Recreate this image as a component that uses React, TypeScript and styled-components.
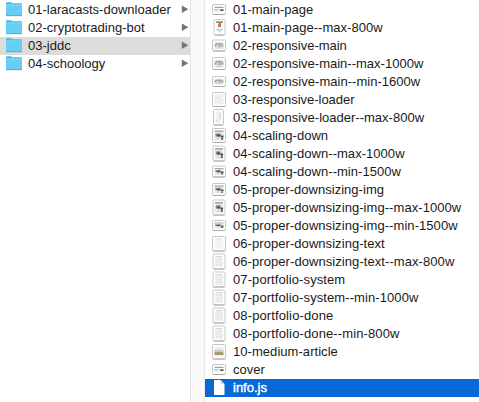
import React from "react";
import styled, { createGlobalStyle } from "styled-components";

const GlobalStyle = createGlobalStyle`
  body { margin: 0; background: #fff; overflow: hidden; }
`;

const Browser = styled.main`
  display: grid;
  grid-template-columns: 190px 15px 1fr;
  width: 479px;
  height: 402px;
  overflow: hidden;
  background: #fff;
  color: #1a1a1a;
  font: 13px/18px "Liberation Sans", Arial, sans-serif;
`;

const Column = styled.ul`
  margin: 0;
  padding: 1px 0 0;
  list-style: none;
  min-width: 0;
`;

const ScrollTrack = styled.div`
  box-sizing: border-box;
  background: #fafafa;
  border-left: 1px solid #e4e4e4;
  border-right: 1px solid #e8e8e8;
`;

const FolderRow = styled.li<{ $selected?: boolean }>`
  display: flex;
  align-items: center;
  height: 18px;
  padding: 0 1px 0 5px;
  background: ${(p) => (p.$selected ? "#dcdcdc" : "transparent")};
`;

const FileRow = styled.li<{ $selected?: boolean }>`
  display: flex;
  align-items: center;
  height: 18px;
  padding-left: 6px;
  background: ${(p) => (p.$selected ? "#0869d6" : "transparent")};
  color: ${(p) => (p.$selected ? "#fff" : "inherit")};
  -webkit-text-stroke: ${(p) => (p.$selected ? "0.4px #fff" : "0")};
`;

const Label = styled.span<{ $gap: number; $spacing: number }>`
  flex: 1;
  margin-left: ${(p) => p.$gap}px;
  letter-spacing: ${(p) => p.$spacing}px;
  white-space: nowrap;
`;

const Icon = styled.svg`
  display: block;
  flex: none;
`;

const FolderIcon = () => (
  <Icon width="18" height="18" viewBox="0 0 18 18">
    <path d="M1 2.2Q1 1.2 2 1.2H6L7.3 2.2H16Q17 2.2 17 3.2V15H1Z" fill="#43b9e8" />
    <path d="M1 3.6H17V15H1Z" fill="#66cdf5" />
    <path d="M1 4H17" stroke="#8bdcfa" strokeWidth=".8" />
    <path d="M1 14.7H17" stroke="#3da6d2" strokeWidth=".8" />
  </Icon>
);

const Disclosure = () => (
  <Icon width="8" height="18" viewBox="0 0 8 18">
    <path d="M.8 4.6 7.3 8.3 .8 12Z" fill="#757575" />
  </Icon>
);

type Kind = "landing" | "phone" | "hero" | "loader" | "tall" | "scale" | "text" | "lines" | "article" | "document";

/* left, top, width, height of the thumbnail's outer border inside an 18px cell */
type Frame = [number, number, number, number];

const strip: Frame = [1.5, 3.5, 13, 10];
const phone: Frame = [3, 0.5, 11, 15.5];
const low: Frame = [1.5, 3, 13, 11];
const medium: Frame = [1.5, 2.5, 13, 12];
const high: Frame = [1.5, 1.5, 13, 14];
const full: Frame = [2, 1, 12, 15];
const page: Frame = [1.5, 1.5, 13, 14.5];
const narrow: Frame = [2.5, 0.5, 10, 15.5];

const Scene = ({ kind }: { kind: Kind }) => {
  switch (kind) {
    case "landing":
      return <><path d="M0 .5h10v1.5H0z" fill="#777" /><path d="M0 4h3v3H0z" fill="#8fcbd2" /><path d="M3.5 4h2v2h-2z" fill="#f0a48e" /><path d="M6.5 4.5h3.5v3H6.5z" fill="#555" /><path d="M3 8h3v1H3z" fill="#aacbe4" /></>;
    case "phone":
      return <><path d="M0 0h10v1H0z" fill="#555" /><path d="M3 2h4v3H3z" fill="#df7050" /><path d="M4 1.5h3v1H4z" fill="#774536" /><path d="M1 6.5h3v1H1zM6 6.5h3v1H6z" fill="#62b7df" /><path d="M4 8h2v1.5H4z" fill="#7bbcf0" /></>;
    case "hero":
      return <><path d="M0 0h10v10H0z" fill="#ececec" /><path d="M0 4 2 1.5h6L10 4v2.5H7.5V4h-5v2.5H0z" fill="#a8a8a8" /><path d="M4 5h3v1.5H4z" fill="#8b7770" /><path d="M1 8h8v1H1z" fill="#b8c4b9" /></>;
    case "loader":
      return <><path d="M0 0h10v10H0z" fill="#f1f1f1" /><path d="M5 1v4h4v4H6M1 3h3M1 7h4" stroke="#e1e1e1" strokeWidth=".8" fill="none" /></>;
    case "tall":
      return <><path d="M0 0h10v10H0z" fill="#f1f1f1" /><path d="M6 1h3v6H6zM1 7h4v2H1z" fill="#dedede" /></>;
    case "scale":
      return <><path d="M0 0h10v10H0z" fill="#e9e9e9" /><path d="M0 0h10v1.5H0z" fill="#aaa" /><path d="M1 3h6v3H1z" fill="#888" /><path d="M3 4h3v2H3zM7 5h3v2H7zM7.5 7.5h2v1.7h-2z" fill="#484848" /><path d="M3 7.5h2v1H3z" fill="#a7cfbc" /></>;
    case "text":
      return <><path d="M0 0h10v10H0z" fill="#f4f4f4" /><path d="M2 0h6v.8H2z" fill="#d8d8d8" /><path d="M1 3h5v.6H1zM2 6h6v.6H2z" fill="#e8e8e8" /></>;
    case "lines":
      return <><path d="M0 0h10v10H0z" fill="#f0f0f0" /><path d="M2 0h6v.8H2z" fill="#cecece" /><path d="M1 2.5h3v.7H1zM5 2.5h4v.7H5zM2 5h6v.7H2zM1 7.5h4v.7H1zM6 7.5h3v.7H6z" fill="#dcdcdc" /></>;
    case "article":
      return <><path d="M0 0h10v10H0z" fill="#f1f1f1" /><path d="M0 3h10v4H0z" fill="#cccecd" /><path d="M0 5.5h3l2-.5 5 1V8H0z" fill="#a99868" /></>;
    default:
      return null;
  }
};

const FileIcon = ({ kind, frame }: { kind: Kind; frame: Frame }) => {
  if (kind === "document") {
    return (
      <Icon width="18" height="18" viewBox="0 0 18 18">
        <path d="M3 1H9.5L13.5 5V16H3Z" fill="#fff" />
        <path d="M9.5 1V5H13.5Z" fill="#c4dcf3" />
      </Icon>
    );
  }
  const [x, y, w, h] = frame;
  return (
    <Icon width="18" height="18" viewBox="0 0 18 18">
      <rect x={x} y={y} width={w} height={h} rx="1.2" fill="#fff" stroke="#c6c6c6" />
      <path d={`M${x + 0.6} ${y + h}h${w - 1.2}`} stroke="#aaa" />
      <g transform={`translate(${x + 2} ${y + 2}) scale(${(w - 4) / 10} ${(h - 4) / 10})`}>
        <Scene kind={kind} />
      </g>
    </Icon>
  );
};

const folders: [string, number][] = [
  ["01-laracasts-downloader", 0.02],
  ["02-cryptotrading-bot", 0.02],
  ["03-jddc", 0],
  ["04-schoology", 0],
];

const files: [string, Kind, Frame, number][] = [
  ["01-main-page", "landing", strip, 0],
  ["01-main-page--max-800w", "phone", phone, 0.04],
  ["02-responsive-main", "hero", low, -0.02],
  ["02-responsive-main--max-1000w", "hero", medium, 0.01],
  ["02-responsive-main--min-1600w", "hero", strip, 0.03],
  ["03-responsive-loader", "loader", high, -0.03],
  ["03-responsive-loader--max-800w", "tall", narrow, 0.01],
  ["04-scaling-down", "scale", high, 0.03],
  ["04-scaling-down--max-1000w", "scale", full, 0.04],
  ["04-scaling-down--min-1500w", "scale", low, 0.04],
  ["05-proper-downsizing-img", "scale", medium, 0.03],
  ["05-proper-downsizing-img--max-1000w", "scale", full, 0.06],
  ["05-proper-downsizing-img--min-1500w", "scale", strip, 0.06],
  ["06-proper-downsizing-text", "text", page, 0.06],
  ["06-proper-downsizing-text--max-800w", "lines", full, 0.07],
  ["07-portfolio-system", "lines", full, 0.09],
  ["07-portfolio-system--min-1000w", "lines", full, 0.09],
  ["08-portfolio-done", "lines", full, 0.12],
  ["08-portfolio-done--min-800w", "lines", full, 0.12],
  ["10-medium-article", "article", page, 0.05],
  ["cover", "landing", strip, 0],
  ["info.js", "document", full, 0],
];

export default function App() {
  return (
    <>
      <GlobalStyle />
      <Browser>
        <Column>
          {folders.map(([name, spacing]) => (
            <FolderRow key={name} $selected={name === "03-jddc"}>
              <FolderIcon />
              <Label $gap={5} $spacing={spacing}>{name}</Label>
              <Disclosure />
            </FolderRow>
          ))}
        </Column>
        <ScrollTrack />
        <Column>
          {files.map(([name, kind, frame, spacing]) => (
            <FileRow key={name} $selected={name === "info.js"}>
              <FileIcon kind={kind} frame={frame} />
              <Label $gap={4} $spacing={spacing}>{name}</Label>
            </FileRow>
          ))}
        </Column>
      </Browser>
    </>
  );
}
